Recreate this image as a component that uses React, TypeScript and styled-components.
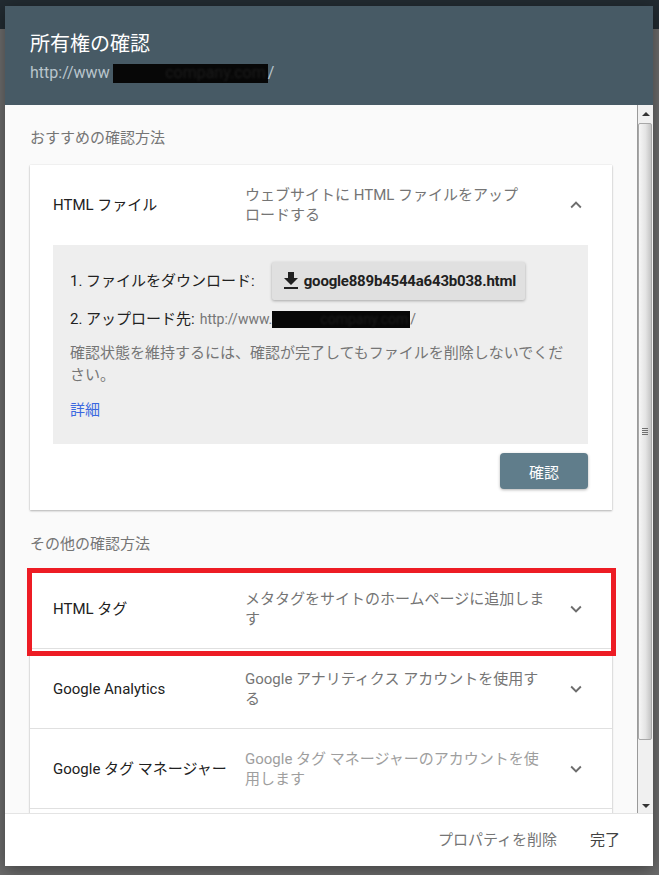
import React from "react";
import styled, { createGlobalStyle } from "styled-components";

const Global = createGlobalStyle`
  html, body { margin: 0; padding: 0; }
  body { font-family: "Roboto", "Noto Sans CJK JP", sans-serif; }
  * { box-sizing: border-box; }
`;

const FONT = `"Roboto", "Noto Sans CJK JP", sans-serif`;

const Page = styled.div`
  width: 659px;
  height: 875px;
  overflow: hidden;
  padding: 6px 6px 9px 5px;
  background: linear-gradient(to bottom, #222b31 0, #222b31 29px, #6c6c6c 29px, #6c6c6c 100%);
  font-family: ${FONT};
`;

const Dialog = styled.div`
  width: 648px;
  height: 860px;
  display: flex;
  flex-direction: column;
  background: #fafafa;
  box-shadow: 0 4px 16px rgba(0, 0, 0, 0.4);
`;

const Header = styled.header`
  height: 99px;
  flex: none;
  background: #475a65;
  padding: 24px 25px 0;
`;

const Title = styled.h1`
  margin: 0;
  font-weight: 400;
  font-size: 20px;
  line-height: 28px;
  color: #ffffff;
`;

const SiteUrl = styled.div`
  margin-top: 4px;
  display: flex;
  align-items: center;
  font-size: 16px;
  line-height: 22px;
  color: #b9c5cc;
`;

const Redacted = styled.span<{ $w: number; $h: number; $size: number }>`
  display: inline-flex;
  justify-content: flex-end;
  align-items: center;
  width: ${(p) => p.$w}px;
  height: ${(p) => p.$h}px;
  margin-left: ${(p) => (p.$size > 15 ? 3 : 0)}px;
  padding-right: 2px;
  background: #070707;
  font-size: ${(p) => p.$size}px;
  color: #1c1c1c;
  white-space: nowrap;
`;

const Blur = styled.span`
  filter: blur(0.8px);
`;

const Body = styled.div`
  flex: 1;
  min-height: 0;
  display: flex;
  background: #fafafa;
`;

const Content = styled.div`
  flex: 1;
  min-width: 0;
  overflow: hidden;
  padding: 0 25px;
`;

const SectionTitle = styled.div<{ $mt: number; $mb: number }>`
  margin: ${(p) => p.$mt}px 0 ${(p) => p.$mb}px;
  font-size: 15px;
  line-height: 20px;
  color: #757575;
`;

const Card = styled.div<{ $tail?: number }>`
  position: relative;
  background: #ffffff;
  padding-bottom: ${(p) => p.$tail ?? 0}px;
  box-shadow: 0 1px 2px rgba(0, 0, 0, 0.28), 0 0 1px rgba(0, 0, 0, 0.12);
`;

const MethodRow = styled.div<{ $divider?: boolean }>`
  height: 80px;
  display: grid;
  grid-template-columns: 192px 301px 1fr;
  align-items: center;
  padding: 0 24px 0 23px;
  border-bottom: ${(p) => (p.$divider ? "1px solid #e0e0e0" : "none")};
`;

const MethodLabel = styled.div`
  font-size: 15px;
  line-height: 20px;
  color: #212121;
`;

const MethodDesc = styled.div<{ $muted?: boolean }>`
  font-size: 15px;
  line-height: 20px;
  line-break: strict;
  color: ${(p) => (p.$muted ? "#9e9e9e" : "#757575")};
`;

const NoBreak = styled.span`
  white-space: nowrap;
`;

const Chevron = styled.div`
  justify-self: end;
  display: flex;
  color: #6d6d6d;
  margin-right: 1px;
`;

const Instructions = styled.div`
  margin: 0 24px 0 23px;
  background: #eeeeee;
  padding: 17px 17px 24px;
`;

const StepRow = styled.div<{ $mt?: number }>`
  display: flex;
  align-items: center;
  margin-top: ${(p) => p.$mt ?? 0}px;
  font-size: 15px;
  line-height: 20px;
  color: #212121;
`;

const StepText = styled.span`
  margin-right: 17px;
`;

const StepUrl = styled.span`
  display: inline-flex;
  align-items: center;
  margin-left: 5px;
  font-size: 14px;
  color: #757575;
`;

const FileButton = styled.button`
  height: 38px;
  display: inline-flex;
  align-items: center;
  gap: 1px;
  padding: 0 9px 0 7px;
  border: none;
  border-radius: 2px;
  background: #e0e0e0;
  box-shadow: 0 1px 3px rgba(0, 0, 0, 0.3);
  font-family: ${FONT};
  font-weight: 700;
  font-size: 15px;
  letter-spacing: -0.2px;
  color: #212121;
`;

const Note = styled.p`
  margin: 13px 0 0;
  font-size: 15px;
  line-height: 22px;
  color: #757575;
`;

const DetailLink = styled.a`
  display: block;
  margin-top: 14px;
  font-size: 15px;
  line-height: 20px;
  color: #3b68e0;
  text-decoration: none;
`;

const Actions = styled.div`
  display: flex;
  justify-content: flex-end;
  padding: 9px 24px 21px;
`;

const VerifyButton = styled.button`
  width: 88px;
  height: 36px;
  border: none;
  border-radius: 4px;
  background: #607d8b;
  color: #ffffff;
  font-family: ${FONT};
  font-size: 15px;
  box-shadow: 0 1px 3px rgba(0, 0, 0, 0.3);
`;

const Highlight = styled.div`
  position: absolute;
  left: -3px;
  top: -1px;
  width: 589px;
  height: 88px;
  border: 5px solid #ed1c24;
  pointer-events: none;
  z-index: 1;
`;

const ScrollTrack = styled.div`
  width: 16px;
  flex: none;
  display: flex;
  flex-direction: column;
  background: #f0f0f0;
  border-left: 1px solid #9a9a9a;
`;

const ArrowBox = styled.div<{ $h: number }>`
  height: ${(p) => p.$h}px;
  display: flex;
  align-items: center;
  justify-content: center;
`;

const Triangle = styled.div<{ $down?: boolean }>`
  width: 0;
  height: 0;
  border-left: 4px solid transparent;
  border-right: 4px solid transparent;
  ${(p) => (p.$down ? "border-top: 4px solid #333;" : "border-bottom: 4px solid #333;")}
`;

const Thumb = styled.div`
  height: 617px;
  margin: 0 1px 0 0;
  border: 1px solid #a8a8a8;
  border-radius: 2px;
  background: linear-gradient(to right, #f6f6f6, #e4e4e4 55%, #c4c4c4);
  display: flex;
  align-items: center;
  justify-content: center;
`;

const Grip = styled.div`
  width: 6px;
  height: 7px;
  background: repeating-linear-gradient(to bottom, #707070 0, #707070 1px, transparent 1px, transparent 2px);
`;

const Spacer = styled.div`
  flex: 1;
`;

const Footer = styled.footer`
  height: 53px;
  flex: none;
  display: flex;
  align-items: center;
  justify-content: flex-end;
  gap: 33px;
  padding-right: 33px;
  background: #ffffff;
  border-top: 1px solid #e4e4e4;
`;

const FooterAction = styled.span<{ $strong?: boolean }>`
  font-size: 15px;
  line-height: 20px;
  color: ${(p) => (p.$strong ? "#424242" : "#757575")};
`;

const ExpandIcon = ({ up }: { up?: boolean }) => (
  <svg width="22" height="22" viewBox="0 0 24 24" fill="currentColor">
    {up ? (
      <path d="M7.41 15.41L12 10.83l4.59 4.58L18 14l-6-6-6 6z" />
    ) : (
      <path d="M7.41 8.59L12 13.17l4.59-4.58L18 10l-6 6-6-6 1.41-1.41z" />
    )}
  </svg>
);

const DownloadIcon = () => (
  <svg width="24" height="24" viewBox="0 0 24 24" fill="#212121">
    <path d="M19 9h-4V3H9v6H5l7 7 7-7zM5 18v2h14v-2H5z" />
  </svg>
);

const methods = [
  { label: "HTML タグ", desc: "メタタグをサイトのホームページに追加します", muted: false },
  { label: "Google Analytics", desc: "Google アナリティクス アカウントを使用する", muted: false },
  { label: "Google タグ マネージャー", desc: "Google タグ マネージャーのアカウントを使用します", muted: true },
];

export default function App() {
  return (
    <Page lang="ja">
      <Global />
      <Dialog>
        <Header>
          <Title>所有権の確認</Title>
          <SiteUrl>
            http://www
            <Redacted $w={155} $h={19} $size={16}>
              <Blur>company.com</Blur>
            </Redacted>
            /
          </SiteUrl>
        </Header>
        <Body>
          <Content>
            <SectionTitle $mt={23} $mb={17}>おすすめの確認方法</SectionTitle>
            <Card>
              <MethodRow>
                <MethodLabel>HTML ファイル</MethodLabel>
                <MethodDesc>
                  ウェブサイトに HTML ファイルをアップ<NoBreak>ロードする</NoBreak>
                </MethodDesc>
                <Chevron>
                  <ExpandIcon up />
                </Chevron>
              </MethodRow>
              <Instructions>
                <StepRow>
                  <StepText>1. ファイルをダウンロード:</StepText>
                  <FileButton>
                    <DownloadIcon />
                    google889b4544a643b038.html
                  </FileButton>
                </StepRow>
                <StepRow $mt={9}>
                  2. アップロード先:
                  <StepUrl>
                    http://www.
                    <Redacted $w={138} $h={17} $size={14}>
                      <Blur>company.com</Blur>
                    </Redacted>
                    /
                  </StepUrl>
                </StepRow>
                <Note>確認状態を維持するには、確認が完了してもファイルを削除しないでください。</Note>
                <DetailLink href="#">詳細</DetailLink>
              </Instructions>
              <Actions>
                <VerifyButton>確認</VerifyButton>
              </Actions>
            </Card>
            <SectionTitle $mt={24} $mb={15}>その他の確認方法</SectionTitle>
            <Card $tail={40}>
              <Highlight />
              {methods.map((m) => (
                <MethodRow key={m.label} $divider>
                  <MethodLabel>{m.label}</MethodLabel>
                  <MethodDesc $muted={m.muted}>{m.desc}</MethodDesc>
                  <Chevron>
                    <ExpandIcon />
                  </Chevron>
                </MethodRow>
              ))}
            </Card>
          </Content>
          <ScrollTrack>
            <ArrowBox $h={18}>
              <Triangle />
            </ArrowBox>
            <Thumb>
              <Grip />
            </Thumb>
            <Spacer />
            <ArrowBox $h={14}>
              <Triangle $down />
            </ArrowBox>
          </ScrollTrack>
        </Body>
        <Footer>
          <FooterAction>プロパティを削除</FooterAction>
          <FooterAction $strong>完了</FooterAction>
        </Footer>
      </Dialog>
    </Page>
  );
}
